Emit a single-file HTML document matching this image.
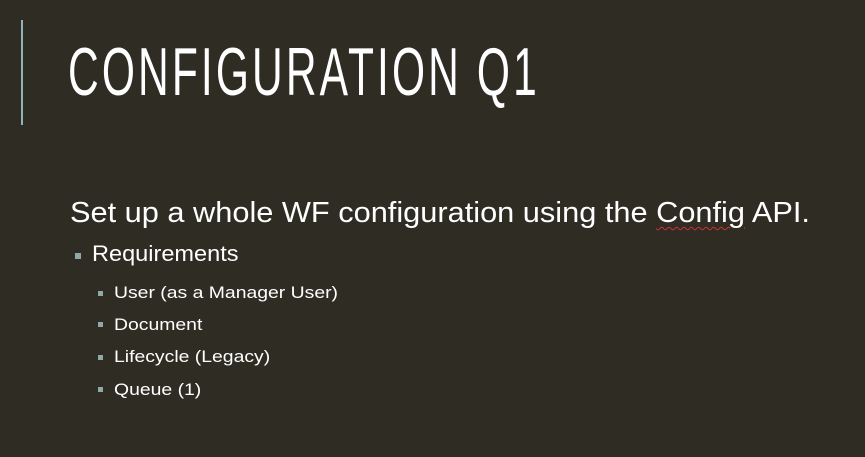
<!DOCTYPE html>
<html><head><meta charset="utf-8"><style>
html,body{margin:0;padding:0}
body{width:865px;height:457px;background:#2e2c23;position:relative;overflow:hidden;font-family:"Liberation Sans",sans-serif;color:#fff}
.bar{position:absolute;left:21px;top:20px;width:2px;height:105px;background:#8fb3b8}
.t{position:absolute;left:68px;top:36px;font-family:"Liberation Sans Narrow","Liberation Sans",sans-serif;font-size:68px;line-height:72px;letter-spacing:5px;white-space:nowrap;transform-origin:0 0;transform:scaleX(0.625)}
.a{position:absolute;left:70px;top:197px;font-size:29px;white-space:nowrap;transform-origin:0 0;transform:scaleX(1.06)}
.u{text-decoration:underline wavy #c33;text-decoration-thickness:1px;text-underline-offset:4px}
.r{position:absolute;left:92px;top:241px;font-size:22px;white-space:nowrap;transform-origin:0 0;transform:scaleX(1.07)}
.s{position:absolute;left:114px;font-size:17px;white-space:nowrap;transform-origin:0 0;transform:scaleX(1.14)}
.b1,.b2{position:absolute;background:#8fa9a8}
.b1{width:6px;height:6px;left:75px;top:253px}
.b2{width:5px;height:5px;left:98px}
</style></head><body>
<div class="bar"></div>
<div class="t">CONFIGURATION Q1</div>
<div class="a">Set up a whole WF configuration using the <span class="u">Config</span> API.</div>
<div class="b1"></div><div class="r">Requirements</div>
<div class="b2" style="top:291px"></div><div class="s" style="top:283px">User (as a Manager User)</div>
<div class="b2" style="top:322px"></div><div class="s" style="top:315px">Document</div>
<div class="b2" style="top:355px"></div><div class="s" style="top:347px">Lifecycle (Legacy)</div>
<div class="b2" style="top:387px"></div><div class="s" style="top:380px">Queue (1)</div>
</body></html>
